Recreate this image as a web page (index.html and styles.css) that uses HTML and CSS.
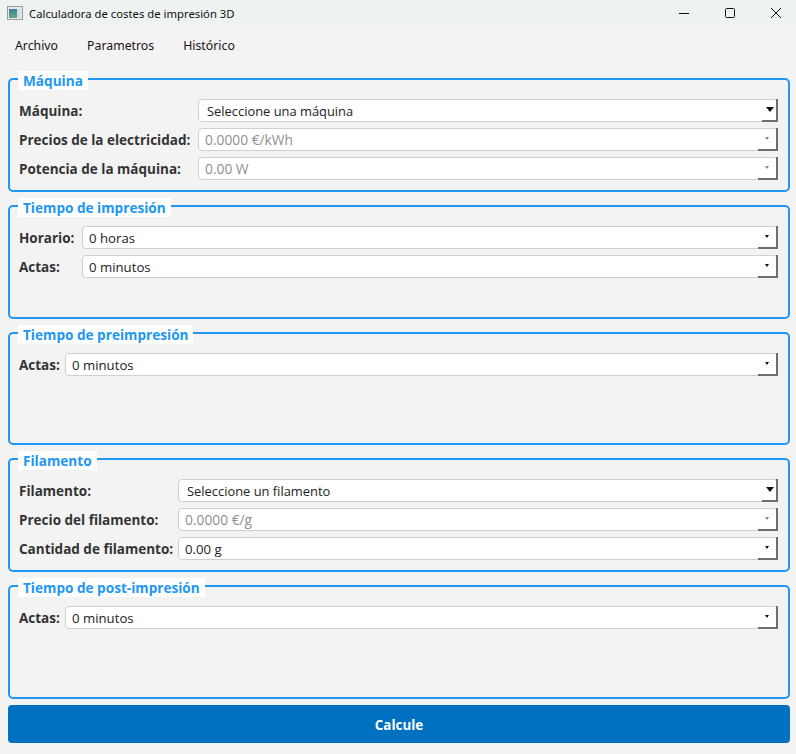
FILE: index.html
```html
<!DOCTYPE html>
<html lang="es">

<head>
    <meta charset="UTF-8" />
    <title>Calculadora de costes de impresión 3D</title>
    <link rel="stylesheet" href="styles.css">
</head>

<body>
    <div class="titlebar">
        <svg class="app-icon" width="16" height="14" viewBox="0 0 16 14">
            <defs>
                <linearGradient id="pic" x1="0" y1="0" x2="0" y2="1">
                    <stop offset="0" stop-color="#3f7f9f" />
                    <stop offset="1" stop-color="#5fa878" />
                </linearGradient>
            </defs>
            <rect x="0.5" y="0.5" width="15" height="13" fill="#e6ecec" stroke="#9a9a9a" />
            <rect x="2" y="3" width="8" height="9" fill="url(#pic)" />
            <rect x="10" y="3" width="4" height="9" fill="#d5dfe3" />
        </svg>
        <span class="title">Calculadora de costes de impresión 3D</span>
        <div class="window-buttons">
            <svg width="12" height="12" viewBox="0 0 12 12">
                <path d="M1 6.5H11" stroke="#111" fill="none" />
            </svg>
            <svg width="12" height="12" viewBox="0 0 12 12">
                <rect x="1.5" y="1.5" width="9" height="9" rx="1" stroke="#111" fill="none" />
            </svg>
            <svg width="12" height="12" viewBox="0 0 12 12">
                <path d="M1 1L11 11M11 1L1 11" stroke="#111" fill="none" />
            </svg>
        </div>
    </div>

    <div class="menubar">
        <span>Archivo</span>
        <span>Parametros</span>
        <span>Histórico</span>
    </div>

    <div class="content">
        <section class="group">
            <h2 class="legend">Máquina</h2>
            <div class="row">
                <label class="w-machine">Máquina:</label>
                <div class="combo main"><span>Seleccione una máquina</span><i class="arrow"></i></div>
            </div>
            <div class="row">
                <label class="w-machine">Precios de la electricidad:</label>
                <div class="combo off"><span>0.0000 €/kWh</span><i class="arrow"></i></div>
            </div>
            <div class="row">
                <label class="w-machine">Potencia de la máquina:</label>
                <div class="combo off"><span>0.00 W</span><i class="arrow"></i></div>
            </div>
        </section>

        <section class="group">
            <h2 class="legend">Tiempo de impresión</h2>
            <div class="row">
                <label class="w-print">Horario:</label>
                <div class="combo"><span>0 horas</span><i class="arrow"></i></div>
            </div>
            <div class="row">
                <label class="w-print">Actas:</label>
                <div class="combo"><span>0 minutos</span><i class="arrow"></i></div>
            </div>
        </section>

        <section class="group short">
            <h2 class="legend">Tiempo de preimpresión</h2>
            <div class="row">
                <label class="w-actas">Actas:</label>
                <div class="combo"><span>0 minutos</span><i class="arrow"></i></div>
            </div>
        </section>

        <section class="group">
            <h2 class="legend">Filamento</h2>
            <div class="row">
                <label class="w-filament">Filamento:</label>
                <div class="combo main"><span>Seleccione un filamento</span><i class="arrow"></i></div>
            </div>
            <div class="row">
                <label class="w-filament">Precio del filamento:</label>
                <div class="combo off"><span>0.0000 €/g</span><i class="arrow"></i></div>
            </div>
            <div class="row">
                <label class="w-filament">Cantidad de filamento:</label>
                <div class="combo"><span>0.00 g</span><i class="arrow"></i></div>
            </div>
        </section>

        <section class="group">
            <h2 class="legend">Tiempo de post-impresión</h2>
            <div class="row">
                <label class="w-actas">Actas:</label>
                <div class="combo"><span>0 minutos</span><i class="arrow"></i></div>
            </div>
        </section>

        <button class="calc">Calcule</button>
    </div>
</body>

</html>
```

FILE: styles.css
```css
html,
body {
    margin: 0;
    height: 754px;
    overflow: hidden;
}

body {
    background-color: #f3f3f3;
    font-family: "Open Sans", "Noto Sans", sans-serif;
    font-size: 13px;
    color: #222;
}

.titlebar {
    display: flex;
    align-items: center;
    height: 28px;
    box-sizing: border-box;
    padding: 0 0 2px 7px;
    background-color: #eef3f1;
}

.app-icon {
    margin-right: 6px;
}

.title {
    font-family: "Noto Sans", sans-serif;
    font-size: 11.3px;
    color: #111;
}

.window-buttons {
    display: flex;
    gap: 34px;
    margin-left: auto;
    padding-right: 14px;
}

.menubar {
    display: flex;
    gap: 29px;
    height: 34px;
    align-items: center;
    padding-left: 15px;
    font-family: "Noto Sans", sans-serif;
    font-size: 12.3px;
    color: #201020;
}

.content {
    display: flex;
    flex-direction: column;
    gap: 13px;
    padding: 16px 6px 0 8px;
}

.group {
    position: relative;
    height: 114px;
    padding: 19px 10px 0 9px;
    border: 2px solid #2196f3;
    border-radius: 5px;
    box-sizing: border-box;
    display: flex;
    flex-direction: column;
    gap: 6px;
}

.group.short {
    height: 113px;
}

.legend {
    position: absolute;
    left: 8px;
    top: -9px;
    margin: 0;
    padding: 0 5px;
    background-color: #fff;
    color: #2196f3;
    font-weight: 700;
    font-size: 13.6px;
    line-height: 19px;
}

.row {
    display: flex;
    align-items: center;
    gap: 6px;
    height: 23px;
    font-size: 13.5px;
    font-weight: 700;
    color: #333;
    white-space: nowrap;
}

.row label {
    flex: none;
}

.w-machine { width: 173px; }
.w-print { width: 57px; }
.w-actas { width: 40px; }
.w-filament { width: 153px; }

.combo {
    flex: 1;
    position: relative;
    height: 23px;
    box-sizing: border-box;
    display: flex;
    align-items: center;
    padding-left: 6px;
    background-color: #fff;
    border: 1px solid #cfcfcf;
    border-radius: 4px;
    font-size: 13.2px;
    font-weight: 400;
    color: #222;
}

.combo.main {
    padding-left: 8px;
    font-size: 12.9px;
}

.combo.off {
    color: #8f8f8f;
    font-size: 13.8px;
}

/* little button at the right end of each combo */
.arrow {
    position: absolute;
    right: -1px;
    top: -1px;
    bottom: -1px;
    width: 20px;
    border-right: 2px solid #6e6e6e;
    border-bottom: 2px solid #6e6e6e;
    box-sizing: border-box;
}

.arrow::after {
    content: "";
    position: absolute;
    right: 7px;
    top: 9px;
    border-left: 2.5px solid transparent;
    border-right: 2.5px solid transparent;
    border-top: 3px solid #111;
}

.main .arrow {
    width: 16px;
}

.main .arrow::after {
    right: 2px;
    top: 8px;
    border-left-width: 4px;
    border-right-width: 4px;
    border-top-width: 5px;
}

.off .arrow::after {
    border-top-color: #888;
}

.calc {
    height: 38px;
    margin-top: -7px;
    padding-top: 3px;
    border: none;
    border-radius: 4px;
    background-color: #0070c0;
    color: #fff;
    font-family: "Open Sans", sans-serif;
    font-weight: 700;
    font-size: 13.4px;
}
```
